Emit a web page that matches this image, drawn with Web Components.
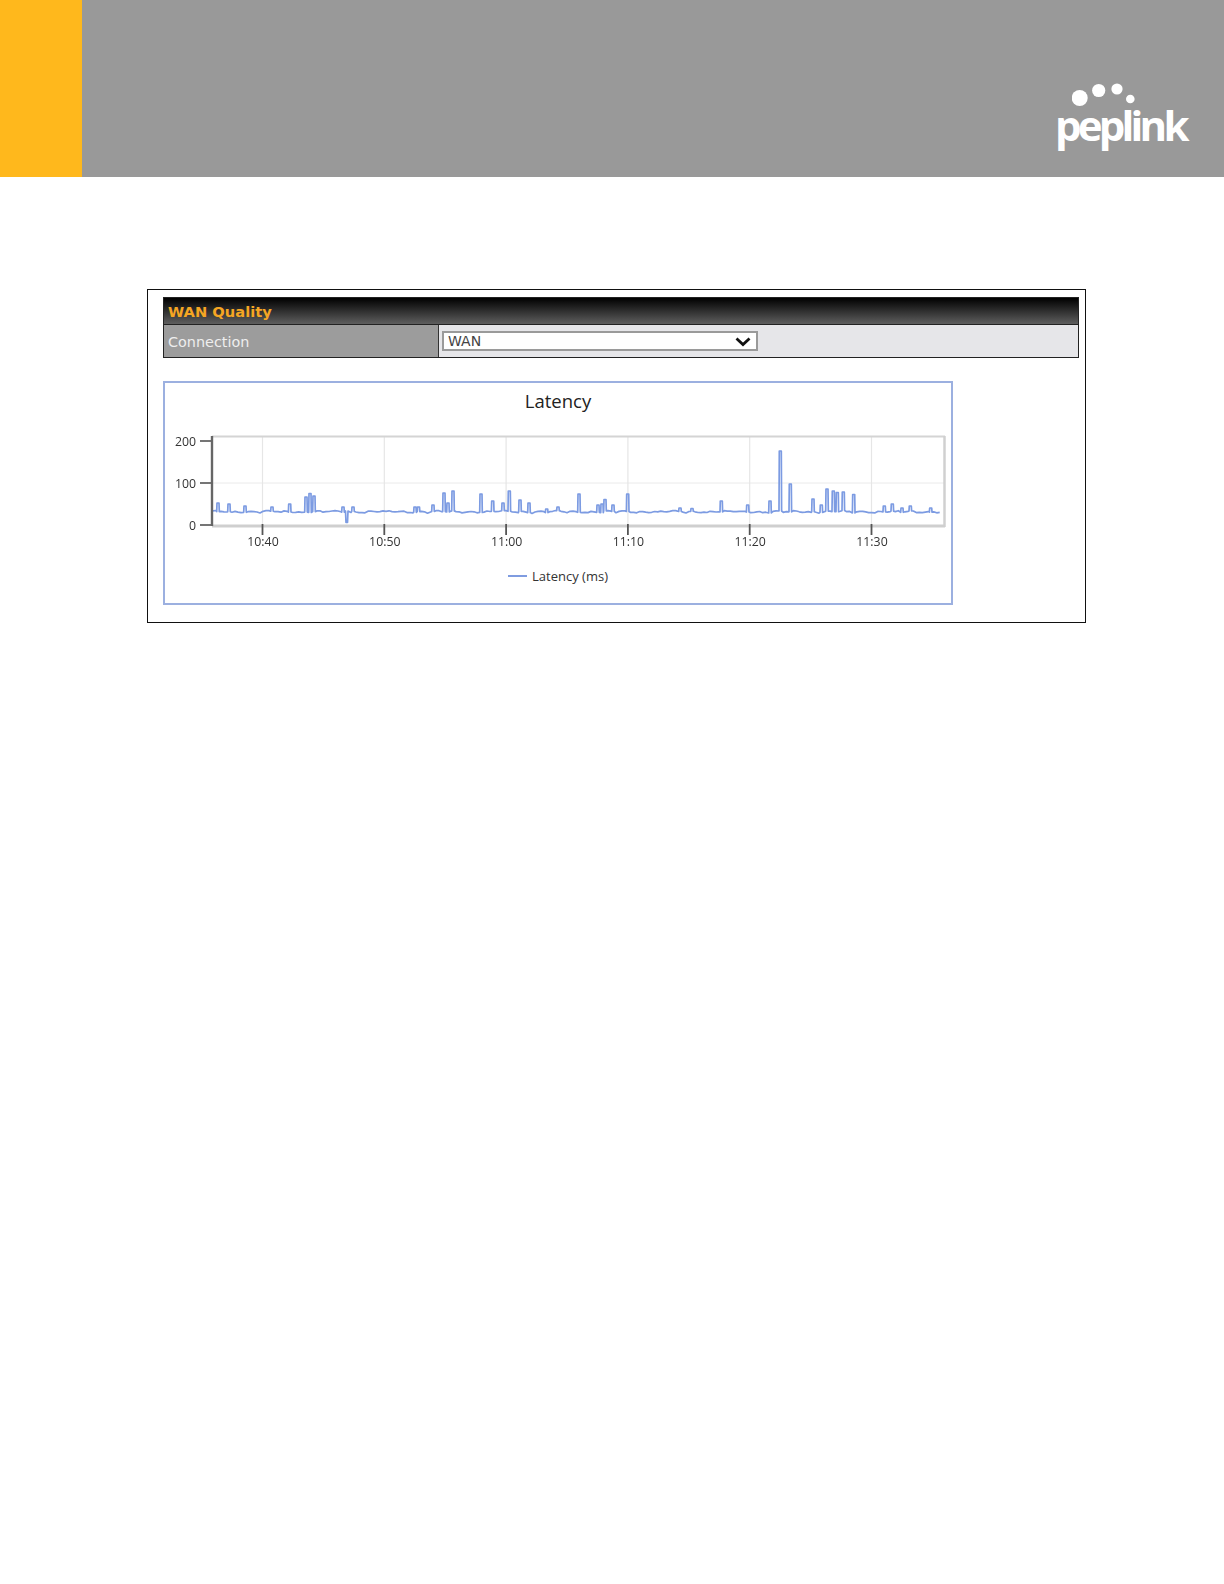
<!DOCTYPE html>
<html>
<head>
<meta charset="utf-8">
<title>WAN Quality</title>
<style>
body{
    margin: 0;
    background: #FFF;
}
</style>
</head>
<body>
<page-header></page-header>
<page-content>
    <wan-panel title-text="WAN Quality" label="Connection" value="WAN">
        <latency-chart></latency-chart>
    </wan-panel>
</page-content>

<script>
const logoTemplate = document.createElement('template');
logoTemplate.innerHTML = `
<style>
:host{
    display: flex;
    flex-direction: column;
    width: 136px;
}
svg{
    display: block;
    margin-left: 15px;
}
span{
    display: block;
    margin: -9px 0 0 -2px;
    font: 700 42px/47px "Open Sans", sans-serif;
    letter-spacing: -3.8px;
    color: #FFF;
}
</style>
<svg width="100" height="30" viewBox="0 0 100 30">
    <circle cx="7.7" cy="18" r="8" fill="#FFF"/>
    <circle cx="26.7" cy="10.5" r="6.6" fill="#FFF"/>
    <circle cx="45" cy="9" r="5.6" fill="#FFF"/>
    <circle cx="58.3" cy="19" r="4.3" fill="#FFF"/>
</svg>
<span>peplink</span>
`;

class PeplinkLogo extends HTMLElement {
    constructor(){
        super();
        this._shadowRoot = this.attachShadow({ mode: 'open' });
        this._shadowRoot.appendChild(logoTemplate.content.cloneNode(true));
    }
}
customElements.define('peplink-logo', PeplinkLogo);

const headerTemplate = document.createElement('template');
headerTemplate.innerHTML = `
<style>
:host{
    display: flex;
    height: 177px;
}
.accent{
    width: 82px;
    background: #FFB81C;
}
.bar{
    flex: 1;
    display: flex;
    justify-content: flex-end;
    align-items: flex-end;
    padding: 0 31px 29px 0;
    background: #999;
}
</style>
<div class="accent"></div>
<div class="bar"><peplink-logo></peplink-logo></div>
`;

class PageHeader extends HTMLElement {
    constructor(){
        super();
        this._shadowRoot = this.attachShadow({ mode: 'open' });
        this._shadowRoot.appendChild(headerTemplate.content.cloneNode(true));
    }
}
customElements.define('page-header', PageHeader);

const contentTemplate = document.createElement('template');
contentTemplate.innerHTML = `
<style>
:host{
    display: block;
    padding: 112px 138px 0 147px;
}
.frame{
    box-sizing: border-box;
    height: 334px;
    padding: 7px 6px 0 15px;
    border: 1px solid #111;
}
</style>
<div class="frame"><slot></slot></div>
`;

class PageContent extends HTMLElement {
    constructor(){
        super();
        this._shadowRoot = this.attachShadow({ mode: 'open' });
        this._shadowRoot.appendChild(contentTemplate.content.cloneNode(true));
    }
}
customElements.define('page-content', PageContent);

const panelTemplate = document.createElement('template');
panelTemplate.innerHTML = `
<style>
:host{
    display: block;
    font-family: "DejaVu Sans", sans-serif;
}
.table{
    border: 1px solid #222;
}
.title{
    height: 26px;
    padding-left: 4px;
    border-bottom: 1px solid #222;
    background: linear-gradient(#000, #5E5E5E);
    font: bold 14.7px/28px "DejaVu Sans", sans-serif;
    color: #F5A623;
}
.row{
    display: flex;
    height: 32px;
}
.label{
    box-sizing: border-box;
    width: 275px;
    padding-left: 4px;
    border-right: 1px solid #333;
    background: #9C9C9C;
    font-size: 14.4px;
    line-height: 34px;
    color: #EEE;
}
.value{
    flex: 1;
    display: flex;
    align-items: center;
    padding-left: 3px;
    background: #E6E6E9;
}
.picker{
    position: relative;
    display: block;
    width: 316px;
    height: 20px;
}
select{
    appearance: none;
    display: block;
    box-sizing: border-box;
    width: 100%;
    height: 20px;
    padding: 0 4px;
    border: 2px solid #9A9A9A;
    border-radius: 0;
    outline: none;
    background: #FFF;
    font: 14px "DejaVu Sans", sans-serif;
    color: #444;
}
.picker svg{
    position: absolute;
    top: 6px;
    right: 7px;
}
.body{
    margin-top: 23px;
}
</style>
<div class="table">
    <div class="title"></div>
    <div class="row">
        <div class="label"></div>
        <div class="value">
            <span class="picker">
                <select><option></option></select>
                <svg width="16" height="10" viewBox="0 0 16 10"><path d="M1.5 1.5 L8 7.5 L14.5 1.5" fill="none" stroke="#111" stroke-width="2.8"/></svg>
            </span>
        </div>
    </div>
</div>
<div class="body"><slot></slot></div>
`;

class WanPanel extends HTMLElement {
    constructor(){
        super();
        this._shadowRoot = this.attachShadow({ mode: 'open' });
        this._shadowRoot.appendChild(panelTemplate.content.cloneNode(true));
    }

    connectedCallback(){
        this._shadowRoot.querySelector('.title').textContent = this.getAttribute('title-text');
        this._shadowRoot.querySelector('.label').textContent = this.getAttribute('label');
        this._shadowRoot.querySelector('option').textContent = this.getAttribute('value');
    }
}
customElements.define('wan-panel', WanPanel);

const chartTemplate = document.createElement('template');
chartTemplate.innerHTML = `
<style>
:host{
    display: block;
    box-sizing: border-box;
    width: 790px;
    height: 224px;
    border: 2px solid #9CB0E0;
    font-family: "Open Sans", sans-serif;
    color: #333;
}
h2{
    margin: 0;
    height: 42px;
    font-size: 18.5px;
    font-weight: 500;
    line-height: 35px;
    text-align: center;
    color: #222;
}
svg{
    display: block;
    filter: blur(0.4px);
}
svg text{
    font: 12.3px "Open Sans", sans-serif;
    fill: #333;
}
.legend{
    display: flex;
    justify-content: center;
    align-items: center;
    gap: 5px;
    margin-top: 12px;
    font-size: 13px;
    line-height: 18px;
}
.legend i{
    display: block;
    width: 19px;
    height: 1.5px;
    background: #7F9CE0;
}
</style>
<h2>Latency</h2>
<svg width="786" height="130" viewBox="165 425 786 130"></svg>
<div class="legend"><i></i><span>Latency (ms)</span></div>
`;

const SVG_NS = 'http://www.w3.org/2000/svg';

// x position and top y of each latency spike, read off the reference
const SPIKES = [
    [218,503],[229,504],[245,506],[272,507],[289.7,504],[306,497],[310,493.5],[314,496],
    [343,507],[353,507],[415,507],[418.5,507],[433,505],[444,493],[448,503],[453,491],
    [481,494],[492.7,501],[503,503],[509.3,491],[520,500],[529,503],[546.7,509],[558,507],
    [579,494],[598,505],[602,504],[605,499.5],[613,505],[627.7,494],[680,508],[692,508.5],
    [721.3,501],[747.7,505],[770,501],[780.3,451],[790.3,484],[813,499],[821.3,505],
    [827,489],[833.3,491],[837.3,492.5],[843.3,492],[853.7,494.5],[884.3,506],[892.3,504],
    [902,508],[910.3,506],[930.7,508]
];

class LatencyChart extends HTMLElement {
    constructor(){
        super();
        this._shadowRoot = this.attachShadow({ mode: 'open' });
        this._shadowRoot.appendChild(chartTemplate.content.cloneNode(true));
        this.$svg = this._shadowRoot.querySelector('svg');
    }

    _line(x1, y1, x2, y2, color, width){
        var line = document.createElementNS(SVG_NS, 'line');
        line.setAttribute('x1', x1);
        line.setAttribute('y1', y1);
        line.setAttribute('x2', x2);
        line.setAttribute('y2', y2);
        line.setAttribute('stroke', color);
        line.setAttribute('stroke-width', width);
        this.$svg.appendChild(line);
    }

    _text(x, y, anchor, value){
        var text = document.createElementNS(SVG_NS, 'text');
        text.setAttribute('x', x);
        text.setAttribute('y', y);
        text.setAttribute('text-anchor', anchor);
        text.textContent = value;
        this.$svg.appendChild(text);
    }

    _drawGrid(){
        var times = ['10:40', '10:50', '11:00', '11:10', '11:20', '11:30'];
        this._line(212, 483, 944, 483, '#EAEAEA', 1);
        for(var t=0; t<times.length; t++){
            var x = 262.5 + t*121.8;
            this._line(x, 437, x, 524, '#E6E6E6', 1.2);
        }
        // frame drawn as a soft grey edge on top, right and bottom
        this._line(212, 436.5, 945, 436.5, '#D4D4D4', 2);
        this._line(944.5, 436, 944.5, 527, '#D0D0D0', 2.5);
        this._line(212, 526, 945, 526, '#CFCFCF', 3);
    }

    _drawAxes(){
        var times = ['10:40', '10:50', '11:00', '11:10', '11:20', '11:30'];
        var values = [['200', 441], ['100', 483], ['0', 525]];
        this._line(212, 436, 212, 526, '#666', 2.4);
        for(var v=0; v<values.length; v++){
            this._line(200, values[v][1], 212, values[v][1], '#666', 1.8);
            this._text(196, values[v][1]+4.5, 'end', values[v][0]);
        }
        for(var t=0; t<times.length; t++){
            var x = 262.5 + t*121.8;
            this._line(x, 524, x, 535, '#555', 1.8);
            this._text(x+0.5, 546, 'middle', times[t]);
        }
    }

    _baseline(x){
        return 511.6 + Math.sin(x*0.37)*0.6 + Math.sin(x*0.11)*0.5 + Math.max(0, Math.sin(x*0.9)-0.8)*5;
    }

    _drawSeries(){
        var d = 'M213 ' + this._baseline(213).toFixed(1);
        var x = 213;
        for(var s=0; s<SPIKES.length; s++){
            var sx = SPIKES[s][0], top = SPIKES[s][1];
            for(var n=x+3; n<sx-1.5; n+=3){
                d += ' L' + n + ' ' + this._baseline(n).toFixed(1);
            }
            d += ' L' + (sx-1.3) + ' ' + this._baseline(sx).toFixed(1);
            d += ' L' + (sx-1) + ' ' + top;
            d += ' L' + (sx+1) + ' ' + top;
            d += ' L' + (sx+1.3) + ' ' + this._baseline(sx).toFixed(1);
            // the dip below the baseline just after 10:47
            if(sx == 343){
                d += ' L345.5 511 L346 522.5 L347.5 522.5 L348 511';
                sx = 348;
            }
            x = sx;
        }
        for(var e=x+3; e<942; e+=3){
            d += ' L' + e + ' ' + this._baseline(e).toFixed(1);
        }
        var path = document.createElementNS(SVG_NS, 'path');
        path.setAttribute('d', d);
        path.setAttribute('fill', 'none');
        path.setAttribute('stroke', '#7C9BE2');
        path.setAttribute('stroke-width', '1.7');
        path.setAttribute('stroke-linejoin', 'round');
        this.$svg.appendChild(path);
    }

    connectedCallback(){
        this._drawGrid();
        this._drawSeries();
        this._drawAxes();
    }
}
customElements.define('latency-chart', LatencyChart);
</script>
</body>
</html>
